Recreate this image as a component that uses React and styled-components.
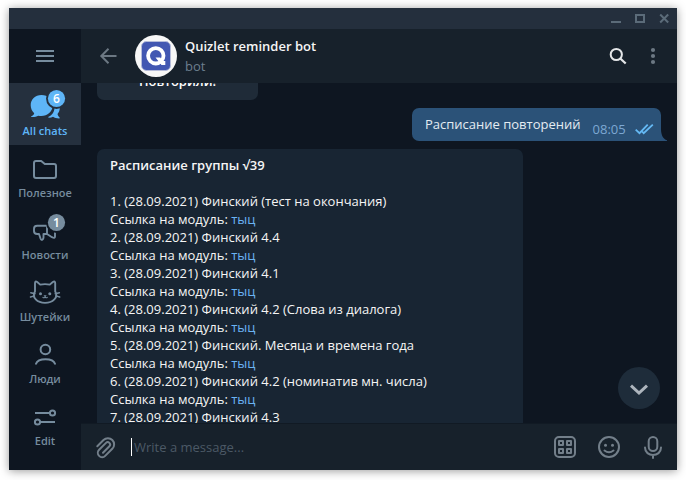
import React from "react";
import styled, { createGlobalStyle } from "styled-components";

const Global = createGlobalStyle`
  * { box-sizing: border-box; }
  body { margin: 0; background: #fff; font-family: "Open Sans", "Noto Sans", sans-serif; font-size: 13px; overflow: hidden; }
  svg { display: block; flex: none; }
`;

const Page = styled.div`
  width: 686px;
  height: 480px;
  padding: 8px 9px 10px;
`;
const Window = styled.main`
  height: 462px;
  display: flex;
  flex-direction: column;
  background: #0e1621;
  box-shadow: 0 1px 9px rgba(0, 0, 0, 0.4);
`;
const TitleBar = styled.header`
  height: 21px;
  flex: none;
  display: flex;
  justify-content: flex-end;
  background: #242f3d;
`;
const Body = styled.div`
  flex: 1;
  display: flex;
  min-height: 0;
`;
const Sidebar = styled.nav`
  width: 72px;
  flex: none;
  display: flex;
  flex-direction: column;
`;
const MenuButton = styled.div`
  height: 54px;
  display: flex;
  align-items: center;
  justify-content: center;
`;
const Folder = styled.div`
  height: 62px;
  padding-top: 3px;
  display: flex;
  flex-direction: column;
  align-items: center;
  background: ${(p) => (p.$active ? "#25303e" : "transparent")};
  color: ${(p) => (p.$active ? "#5eb5f7" : "#768c9e")};
`;
const FolderLabel = styled.span`
  margin-top: 3px;
  height: 16px;
  line-height: 16px;
  font-size: 11px;
  font-weight: 600;
  white-space: nowrap;
`;
const BadgeText = styled.text`
  font: 600 12px "Open Sans", sans-serif;
  fill: #fff;
  text-anchor: middle;
`;
const Chat = styled.section`
  flex: 1;
  display: flex;
  flex-direction: column;
  min-width: 0;
`;
const ChatHeader = styled.header`
  height: 54px;
  flex: none;
  display: flex;
  align-items: center;
  padding-left: 18px;
  background: #17212b;
`;
const Avatar = styled.div`
  margin-left: 18px;
  width: 42px;
  height: 42px;
  border-radius: 50%;
  overflow: hidden;
`;
const Identity = styled.div`
  flex: 1;
  margin-left: 8px;
  display: flex;
  flex-direction: column;
`;
const Name = styled.span`
  height: 20px;
  line-height: 20px;
  font-weight: 600;
  color: #f5f5f5;
`;
const Status = styled.span`
  height: 20px;
  line-height: 20px;
  color: #6d7f8f;
`;
const Messages = styled.div`
  flex: 1;
  min-height: 0;
  padding: 0 16px;
  position: relative;
  display: flex;
  flex-direction: column;
  align-items: flex-start;
  overflow: hidden;
`;
const Keyboard = styled.div`
  width: 161px;
  height: 36px;
  flex: none;
  margin-top: -19px;
  border-radius: 7px;
  background: #1f2b38;
  color: #fff;
  font-weight: 600;
  text-align: center;
  line-height: 35px;
`;
const Outgoing = styled.div`
  align-self: flex-end;
  flex: none;
  height: 33px;
  margin: 8px -6px 0 0;
  display: flex;
  color: #e4ecf2;
`;
const OutBody = styled.div`
  width: 249px;
  padding-left: 13px;
  display: flex;
  border-radius: 7px 7px 0 7px;
  background: #2b5278;
  line-height: 33px;
`;
const Time = styled.span`
  margin-left: 12px;
  padding-top: 5px;
  color: #7da8d3;
`;
const Incoming = styled.article`
  width: 426px;
  flex: none;
  margin-top: 8px;
  padding: 7px 13px;
  border-radius: 7px;
  background: #182533;
  color: #f5f5f5;
  line-height: 18px;
`;
const Heading = styled.div`
  font-weight: 600;
  margin-bottom: 18px;
`;
const Link = styled.span`
  color: #6ab3f3;
`;
const ScrollDown = styled.button`
  position: absolute;
  right: 17px;
  bottom: 14px;
  width: 42px;
  height: 42px;
  padding: 0;
  border: 0;
  border-radius: 50%;
  background: #1e2c3a;
`;
const Composer = styled.footer`
  height: 47px;
  flex: none;
  display: flex;
  align-items: center;
  border-top: 1px solid #111a24;
  background: #17212b;
`;
const Field = styled.div`
  flex: 1;
  margin-left: 14px;
  height: 18px;
  padding-left: 2px;
  border-left: 1px solid #fff;
  line-height: 18px;
  color: #4c5966;
`;

/* Sidebar glyphs share a 44x34 canvas. */
const Glyph = ({ children }) => (
  <svg width="44" height="34" viewBox="0 0 44 34" fill="none" stroke="currentColor" strokeWidth="2" strokeLinecap="round" strokeLinejoin="round">
    {children}
  </svg>
);

const Badge = ({ value, gap }) => (
  <g stroke="none">
    <circle cx="33.5" cy="12.5" r="10.5" fill={gap} />
    <circle cx="33.5" cy="12.5" r="8.6" fill="currentColor" />
    <BadgeText x="33.5" y="17">{value}</BadgeText>
  </g>
);

const folders = [
  {
    label: "All chats",
    active: true,
    icon: (
      <Glyph>
        <g fill="currentColor" stroke="none">
          <path d="M18.5 9C12 9 7.700 13.500 7.700 19.200C7.700 22.500 9 25.200 11.200 27.200C11 28.600 9.800 29.700 8.300 30.200C8 30.400 8.100 31 8.500 31C11 31.200 13.500 30.700 15.300 29.700C23 31.300 29.500 26.500 29.700 19.500C29.800 13.500 25 9 18.500 9Z" />
          <path d="M31.500 22H36.800C36.700 24.700 35.800 26.400 34.500 28C34.800 29.600 35.700 30.500 36.600 31.500C36.900 32 36.600 32.500 36 32.500C33.500 32.500 31.700 31.800 30 30.800C28.300 31.600 26.800 31.800 25.200 31.500C25 31.300 25 31 25.200 30.900C29 29.500 31.200 26 31.500 22Z" />
        </g>
        <Badge value="6" gap="#25303e" />
      </Glyph>
    ),
  },
  {
    label: "Полезное",
    icon: (
      <Glyph>
        <path d="M13 12.900H18.200L21.800 15.900H31Q33 15.900 33 17.900V28Q33 30 31 30H13Q11 30 11 28V14.900Q11 12.900 13 12.900Z" />
      </Glyph>
    ),
  },
  {
    label: "Новости",
    icon: (
      <Glyph>
        <path d="M24 15.700H14.200Q11 15.700 11 18.700V21Q11 24 14.200 24H16L17.500 28.500Q18.200 30.200 19.400 29.600Q20.500 29 20.500 27.500V24M24 15.700V24L29 27.200Q32 28.800 32 26.500V21.500M20.500 24H24" strokeWidth="1.9" />
        <Badge value="1" gap="#0e1621" />
      </Glyph>
    ),
  },
  {
    label: "Шутейки",
    icon: (
      <Glyph>
        <path d="M12 19.500V11.200Q12 8.700 14.200 10L17.200 12.600Q22 11.600 26.800 12.600L29.800 10Q32.200 8.700 32.200 11.200V19.500C36 25.500 29.500 30.900 22 30.900S8.200 25.500 12 19.500Z" strokeWidth="1.900" />
        <path d="M7.800 20.800L12 21.700M7.500 25L11.500 23.900M36.400 20.800L32.200 21.700M36.700 25L32.700 23.900" strokeWidth="1.500" />
        <path d="M20 25.400Q21.300 26.300 22.100 25Q22.900 26.300 24.200 25.400" strokeWidth="1.200" />
        <g fill="currentColor" stroke="none">
          <circle cx="17.500" cy="21.800" r="1.500" /><circle cx="26.800" cy="21.800" r="1.500" />
          <path d="M20.500 23.200H23.700L22.100 25.200Z" />
        </g>
      </Glyph>
    ),
  },
  {
    label: "Люди",
    icon: (
      <Glyph>
        <circle cx="22.400" cy="15.500" r="4.800" />
        <path d="M13 30.500V29.800C15 23.600 30 23.600 32 29.800V30.500" strokeLinecap="butt" />
      </Glyph>
    ),
  },
  {
    label: "Edit",
    icon: (
      <Glyph>
        <path d="M12 17H27M17 26H32" strokeLinecap="butt" />
        <circle cx="29.500" cy="17" r="2.600" /><circle cx="14.500" cy="26" r="2.600" />
      </Glyph>
    ),
  },
];

const lessons = [
  { title: "Финский (тест на окончания)", link: "тыц" },
  { title: "Финский 4.4", link: "тыц" },
  { title: "Финский 4.1", link: "тыц" },
  { title: "Финский 4.2 (Слова из диалога)", link: "тыц" },
  { title: "Финский. Месяца и времена года", link: "тыц" },
  { title: "Финский 4.2 (номинатив мн. числа)", link: "тыц" },
  { title: "Финский 4.3" },
];

const WindowControls = () => (
  <svg width="70" height="21" viewBox="0 0 70 21" fill="none" stroke="#5b6b79" strokeWidth="2">
    <path d="M4 14H14M53.200 6.500L61.200 14.500M61.200 6.500L53.200 14.500" />
    <rect x="29" y="7" width="8" height="7" />
  </svg>
);

const QuizLogo = () => (
  <svg width="42" height="42" viewBox="0 0 42 42">
    <rect width="42" height="42" fill="#f7f7f7" />
    <rect x="6.500" y="6.500" width="29" height="29" rx="5" fill="#4257b2" stroke="#b5bcda" />
    <circle cx="20.800" cy="20.800" r="7.700" fill="none" stroke="#fff" strokeWidth="3.800" />
    <path d="M20.500 22.500H25.300L27.500 26H30.300V30H26.500Z" fill="#fff" />
  </svg>
);

const HeaderActions = () => (
  <svg width="76" height="54" viewBox="0 0 76 54" fill="none">
    <circle cx="15.300" cy="25.500" r="5.600" stroke="#e4e6e8" strokeWidth="2" />
    <path d="M19.300 29.500L24.700 34.500" stroke="#e4e6e8" strokeWidth="2.300" />
    <g fill="#6c7883"><circle cx="52" cy="21" r="2.100" /><circle cx="52" cy="27" r="2.100" /><circle cx="52" cy="33" r="2.100" /></g>
  </svg>
);

const ReadTicks = () => (
  <svg width="30" height="33" viewBox="0 0 30 33" fill="none" stroke="#65b9f4" strokeWidth="1.800">
    <path d="M9.700 21.600L13.500 25.200L21.700 16.600M15.600 23L17.700 25.200L26.800 16.600" />
  </svg>
);

const ComposerActions = () => (
  <svg width="132" height="46" viewBox="0 0 132 46" fill="none" stroke="#737f8a" strokeWidth="2" strokeLinecap="round">
    <rect x="10" y="13" width="20" height="20" rx="4" />
    <g strokeLinejoin="round"><rect x="14" y="17" width="4" height="4" /><rect x="22" y="17" width="4" height="4" /><rect x="14" y="25" width="4" height="4" /><rect x="22" y="25" width="4" height="4" /></g>
    <circle cx="64" cy="23" r="10" />
    <path d="M59.500 26.500Q64 30 68.500 26.500" />
    <g fill="#737f8a" stroke="none"><circle cx="60.500" cy="21.300" r="1.500" /><circle cx="67.500" cy="21.300" r="1.500" /></g>
    <rect x="103.700" y="13" width="8.600" height="14" rx="4.300" />
    <path d="M100 23.500C100 33.500 116 33.500 116 23.500M108 31V34" />
  </svg>
);

export default function App() {
  return (
    <Page>
      <Global />
      <Window>
        <TitleBar><WindowControls /></TitleBar>
        <Body>
          <Sidebar>
            <MenuButton>
              <svg width="18" height="12" stroke="#768c9e" strokeWidth="2"><path d="M0 1H18M0 6H18M0 11H18" /></svg>
            </MenuButton>
            {folders.map((f) => (
              <Folder key={f.label} $active={f.active}>
                {f.icon}
                <FolderLabel>{f.label}</FolderLabel>
              </Folder>
            ))}
          </Sidebar>
          <Chat>
            <ChatHeader>
              <svg width="18" height="18" viewBox="0 0 18 18" fill="none" stroke="#6c7883" strokeWidth="2"><path d="M17.500 9H3M9.500 1.800L2.300 9L9.500 16.200" /></svg>
              <Avatar><QuizLogo /></Avatar>
              <Identity>
                <Name>Quizlet reminder bot</Name>
                <Status>bot</Status>
              </Identity>
              <HeaderActions />
            </ChatHeader>
            <Messages>
              <Keyboard>Повторили!</Keyboard>
              <Outgoing>
                <OutBody>
                  Расписание повторений
                  <Time>08:05</Time>
                  <ReadTicks />
                </OutBody>
                <svg width="6" height="33"><path d="M0 21C0 27 2 31 6 32.300V33H0Z" fill="#2b5278" /></svg>
              </Outgoing>
              <Incoming>
                <Heading>Расписание группы √39</Heading>
                {lessons.map(({ title, link }, i) => (
                  <div key={title}>
                    <div>{i + 1}. (28.09.2021) {title}</div>
                    {link && <div>Ссылка на модуль: <Link>{link}</Link></div>}
                  </div>
                ))}
              </Incoming>
              <ScrollDown aria-label="Scroll down">
                <svg width="42" height="42" fill="none" stroke="#adb5bd" strokeWidth="3"><path d="M13 18.700L21 26L29 18.700" /></svg>
              </ScrollDown>
            </Messages>
            <Composer>
              <svg width="36" height="46" viewBox="0 0 36 46" fill="none" stroke="#737f8a" strokeWidth="2" strokeLinecap="round">
                <path d="M16.300 22.200L22.500 16A6.200 6.200 0 0 1 31.300 24.800L24.200 31.900A4.300 4.300 0 0 1 18.100 25.800L25 18.900A2.400 2.400 0 0 1 28.400 22.300L22 28.700" />
              </svg>
              <Field>Write a message...</Field>
              <ComposerActions />
            </Composer>
          </Chat>
        </Body>
      </Window>
    </Page>
  );
}
